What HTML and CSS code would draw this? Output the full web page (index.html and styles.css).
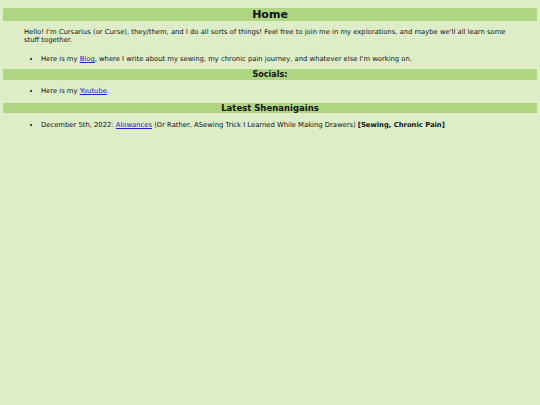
FILE: index.html
```html
<!DOCTYPE html>
<html>
<head>
<meta charset="utf-8">
<link rel="stylesheet" href="styles.css">
</head>
<body>
<h1 class="bar bar-home">Home</h1>
<p class="intro">Hello! I'm Cursarius (or Curse), they/them, and I do all sorts of things! Feel free to join me in my explorations, and maybe we'll all learn some stuff together.</p>
<ul class="list list-blog">
<li>Here is my <a href="#">Blog</a>, where I write about my sewing, my chronic pain journey, and whatever else I'm working on.</li>
</ul>
<h2 class="bar bar-sub">Socials:</h2>
<ul class="list list-socials">
<li>Here is my <a href="#">Youtube</a>.</li>
</ul>
<h2 class="bar bar-latest">Latest Shenanigains</h2>
<ul class="list list-latest">
<li>December 5th, 2022: <a href="#">Alowances</a> (Or Rather, ASewing Trick I Learned While Making Drawers) <b>[Sewing, Chronic Pain]</b></li>
</ul>
</body>
</html>
```
FILE: styles.css
```css
html, body {
  background: #dcedc8;
}
body {
  margin: 0;
  padding: 8px 3px;
  font-family: "DejaVu Sans", Verdana, sans-serif;
  font-size: 6.8px;
  line-height: 8px;
  color: #111;
}
.bar {
  margin: 0;
  background: #aed581;
  text-align: center;
  font-weight: bold;
  color: #111;
}
.bar-home {
  font-size: 11px;
  line-height: 13px;
}
.bar-sub {
  font-size: 8px;
  line-height: 11px;
}
.bar-latest {
  font-size: 8.5px;
  line-height: 10px;
}
.intro {
  margin: 7px 0 0 21px;
  padding-right: 20px;
}
.list {
  margin: 0;
  padding-left: 38px;
}
.list-blog {
  margin: 11px 0 6px 0;
}
.list-socials {
  margin: 7px 0 8px 0;
}
.list-latest {
  margin: 8px 0 0 0;
}
a {
  color: #2222cc;
}
```
